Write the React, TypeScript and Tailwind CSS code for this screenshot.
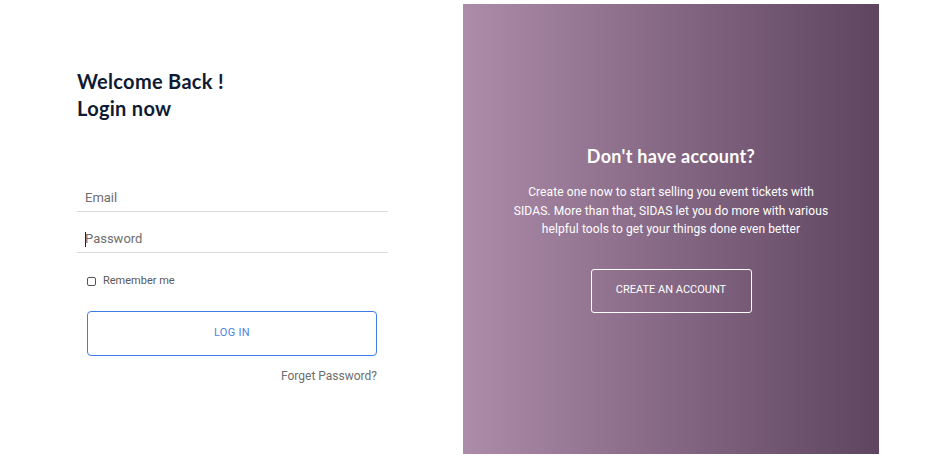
export default function App() {
  return (
    <div className="flex w-[950px] h-[462px] bg-white" style={{ fontFamily: "Roboto, 'Liberation Sans', sans-serif" }}>
      <div className="w-[463px] pl-[77px] pt-[68px]">
        <h1 className="text-[20px] leading-[27px] font-bold text-[#0f1b33] tracking-[0.3px]" style={{ fontFamily: "Lato, 'Noto Sans', sans-serif" }}>
          Welcome Back !<br />Login now
        </h1>
        <div className="mt-[50px] w-[311px]">
          <div className="h-[40px] border-b border-[#dcdcdc] flex items-end pb-[4px] pl-[8px] text-[13px] text-[#6e6e6e]">Email</div>
          <div className="h-[41px] border-b border-[#dcdcdc] flex items-end pb-[4px] pl-[8px] text-[13px] text-[#6e6e6e]">
            <span className="w-px h-[15px] bg-[#222] mr-[-1px] mb-[1px]"></span>Password
          </div>
          <div className="mt-[20px] pl-[10px] flex items-center gap-[7px] text-[11px] text-[#5a5a5a]">
            <span className="w-[9px] h-[9px] border border-[#555] rounded-[2px]"></span>
            Remember me
          </div>
          <div className="ml-[10px] mt-[21px] w-[290px] h-[45px] border border-[#3b7ee8] rounded-[4px] flex items-center justify-center text-[11px] text-[#4f7fe0] tracking-[0.3px]">
            LOG IN
          </div>
          <div className="w-[300px] text-right mt-[11px] text-[12px] text-[#6e6e6e]">Forget Password?</div>
        </div>
      </div>
      <div className="mt-[4px] w-[416px] h-[450px] bg-gradient-to-r from-[#ad8ca9] to-[#5f4560] flex flex-col items-center pt-[140px] text-white">
        <h2 className="text-[18px] font-bold leading-[24px] tracking-[0.3px]" style={{ fontFamily: "Lato, 'Noto Sans', sans-serif" }}>Don't have account?</h2>
        <p className="mt-[15px] text-[12px] leading-[18.5px] text-center w-[340px] tracking-[0.1px]">
          Create one now to start selling you event tickets with<br />SIDAS. More than that, SIDAS let you do more with various<br />helpful tools to get your things done even better
        </p>
        <div className="mt-[30px] w-[161px] h-[44px] border border-white rounded-[3px] flex items-center justify-center text-[11px]">
          CREATE AN ACCOUNT
        </div>
      </div>
    </div>
  );
}
